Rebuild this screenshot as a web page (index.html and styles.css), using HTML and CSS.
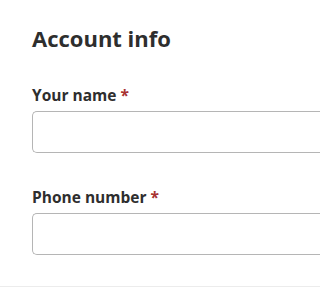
FILE: index.html
```html
<!DOCTYPE html>
<html lang="en">
<head>
<meta charset="utf-8">
<link rel="stylesheet" href="styles.css">
</head>
<body>
<section class="card">
  <h2 class="title">Account info</h2>
  <div class="field">
    <label class="label" for="name">Your name <span class="req">*</span></label>
    <input class="input" id="name" type="text">
  </div>
  <div class="field">
    <label class="label" for="phone">Phone number <span class="req">*</span></label>
    <input class="input" id="phone" type="tel">
  </div>
</section>
</body>
</html>
```

FILE: styles.css
```css
html, body {
  margin: 0;
  padding: 0;
  background: #fff;
}
body {
  font-family: "Open Sans", "Liberation Sans", sans-serif;
  color: #2e2e2e;
}
.card {
  height: 287px;
  box-sizing: border-box;
  padding: 23px 0 0 32px;
  border-bottom: 1px solid #ececec;
}
.title {
  margin: 0 0 32px;
  font-size: 22px;
  font-weight: 700;
  line-height: 30px;
}
.field {
  display: flex;
  flex-direction: column;
  margin-bottom: 34px;
}
.label {
  font-size: 15.5px;
  font-weight: 700;
  line-height: 20px;
  margin-bottom: 6px;
}
.req {
  color: #a83232;
}
.input {
  height: 42px;
  box-sizing: border-box;
  border: 1px solid #b5b5b5;
  border-right: none;
  border-radius: 5px 0 0 5px;
  width: 100%;
  margin: 0;
  padding: 0 10px;
  font: inherit;
  background: #fff;
}
```
